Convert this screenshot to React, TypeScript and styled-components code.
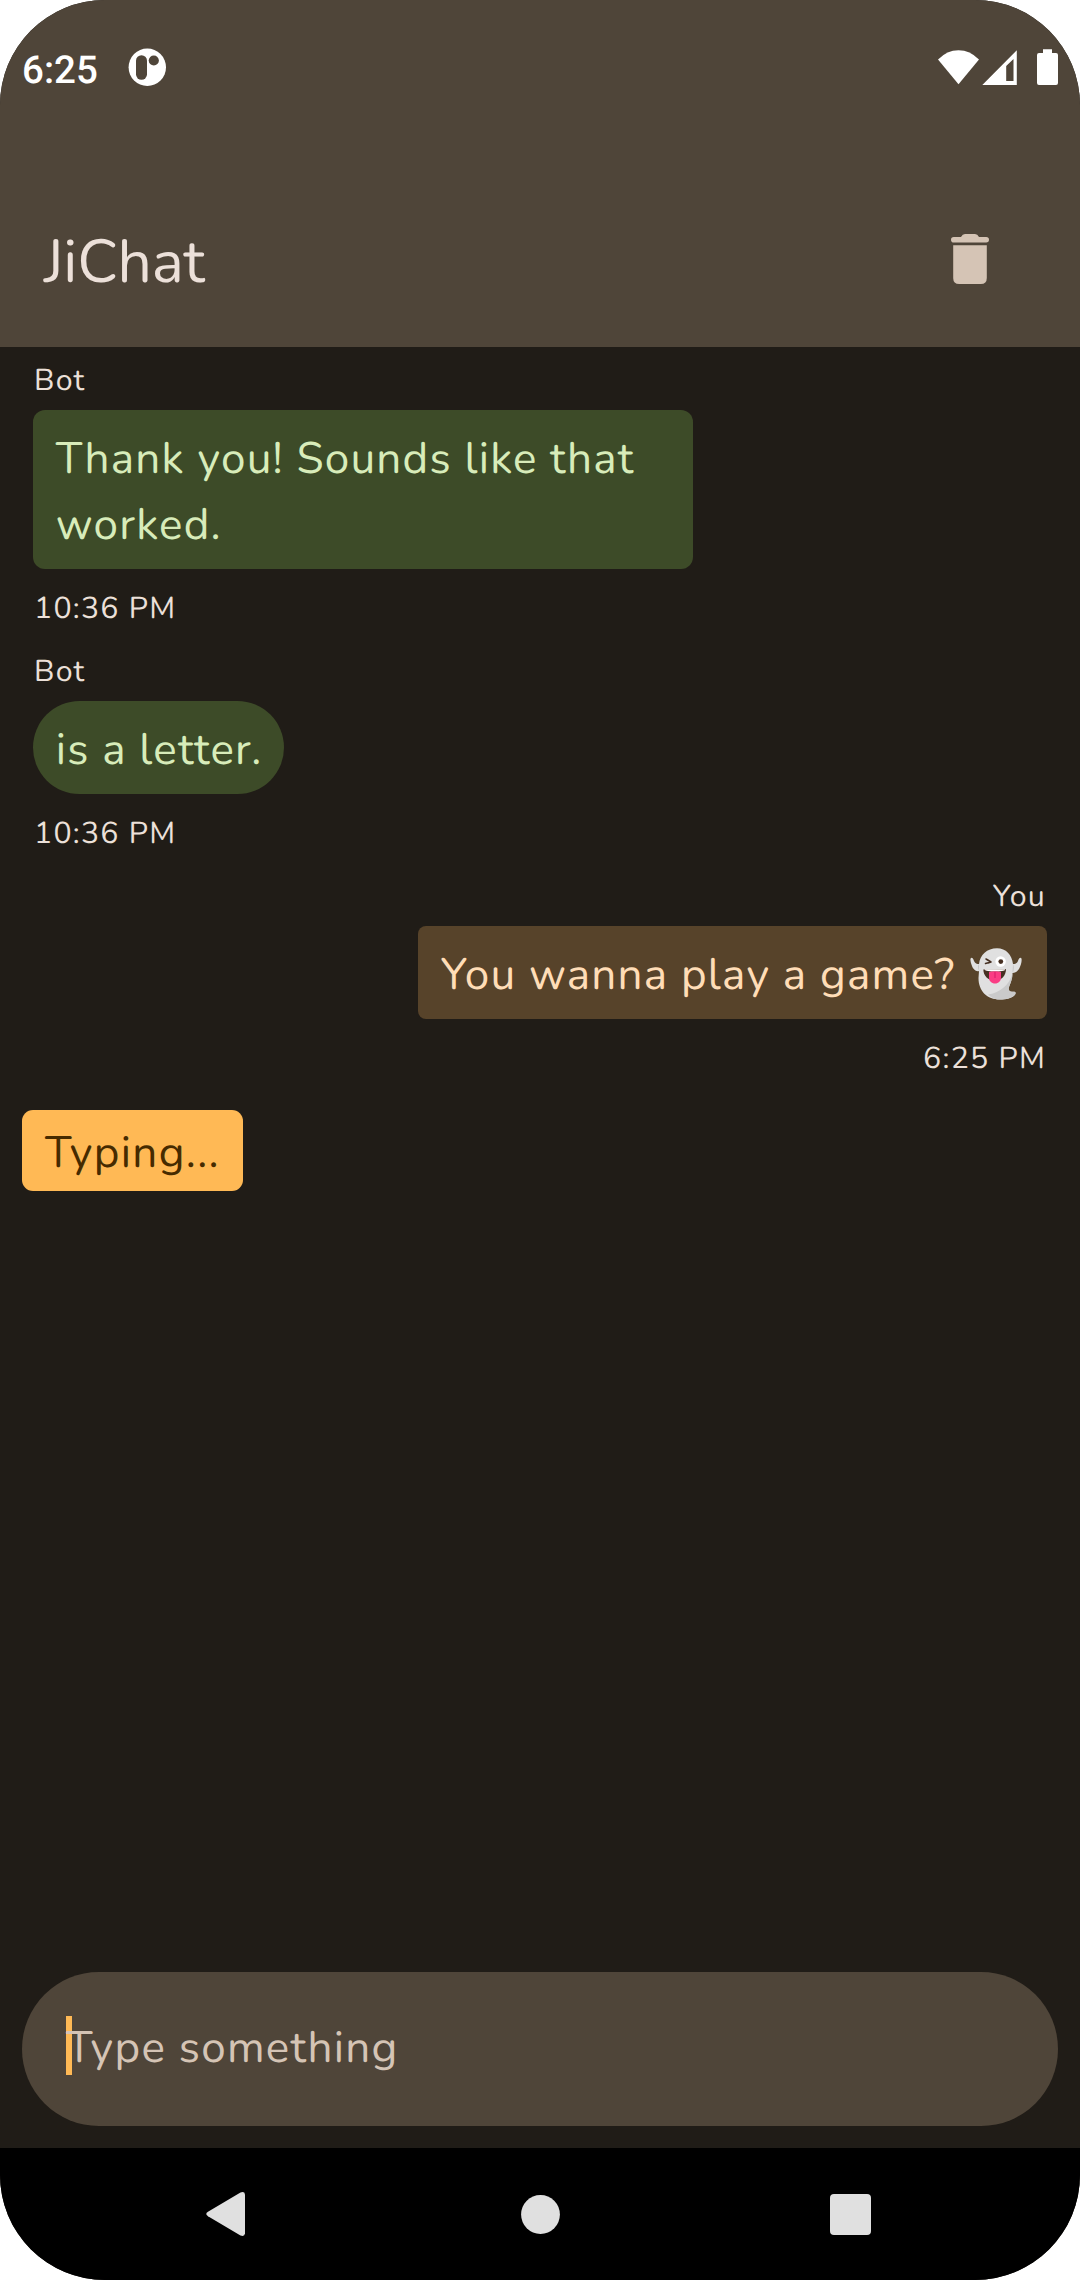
import React from "react";
import styled, { createGlobalStyle } from "styled-components";

const color = {
  bar: "#4f4539",
  surface: "#201c17",
  onSurface: "#ece0d9",
  muted: "#d5c4b5",
  bot: "#3d4b28",
  onBot: "#d8ecba",
  user: "#57432a",
  onUser: "#ffddb7",
  accent: "#ffb955",
  onAccent: "#462b00",
};

const GlobalStyle = createGlobalStyle`
  body { margin: 0; background: #fff; }
  * { box-sizing: border-box; }
  svg { display: block; }
`;

const Screen = styled.main`
  width: 1080px;
  height: 2280px;
  display: flex;
  flex-direction: column;
  overflow: hidden;
  border-radius: 105px;
  background: ${color.surface};
  color: ${color.onSurface};
  font-family: Nunito, Lato, sans-serif;
  text-rendering: geometricPrecision;
`;

const Header = styled.header`
  height: 347px;
  background: ${color.bar};
`;

const StatusBar = styled.div`
  height: 136px;
  padding: 45px 22px 0 22px;
  display: flex;
  align-items: flex-start;
  color: #fff;
`;

const Clock = styled.time`
  width: 106px;
  padding-top: 2px;
  font: 500 38.5px/48px Roboto, sans-serif;
`;

const Badge = styled.div`
  margin-top: 3px;
`;

const StatusIcons = styled.div`
  margin: 3px 0 0 auto;
`;

const TitleRow = styled.div`
  height: 211px;
  padding: 85px 91px 0 44px;
  display: flex;
  justify-content: space-between;
  align-items: flex-start;
`;

const Title = styled.h1`
  margin: 0;
  font-size: 60.5px;
  font-weight: 400;
  line-height: 84px;
  letter-spacing: -0.25px;
`;

const DeleteButton = styled.button`
  margin: 13px 0 0;
  padding: 0;
  border: 0;
  background: none;
  color: ${color.muted};
`;

const Chat = styled.section`
  flex: 1;
  padding: 11px 33px 0;
  display: flex;
  flex-direction: column;
`;

const Message = styled.article<{ $own?: boolean }>`
  display: flex;
  flex-direction: column;
  align-items: ${(p) => (p.$own ? "flex-end" : "flex-start")};
  margin-bottom: 19px;
`;

const Meta = styled.span`
  padding: 0 1px;
  font-size: 30.25px;
  line-height: 44px;
  letter-spacing: 1.25px;
`;

const Bubble = styled.p<{ $own?: boolean; $width: number; $radius: number }>`
  width: ${(p) => p.$width}px;
  margin: 8px 0 17px;
  padding: 16px 0 11px 22.7px;
  border-radius: ${(p) => p.$radius}px;
  background: ${(p) => (p.$own ? color.user : color.bot)};
  color: ${(p) => (p.$own ? color.onUser : color.onBot)};
  font-size: 44px;
  line-height: 66px;
  letter-spacing: 1.24px;
  white-space: pre-line;
  display: flex;
`;

const EmojiSlot = styled.span`
  margin: 6px 25px 0 auto;
`;

const Typing = styled.div`
  width: 221px;
  height: 81px;
  margin: 11px 0 0 -11px;
  padding: 10px 0 0 23px;
  border-radius: 11px;
  background: ${color.accent};
  color: ${color.onAccent};
  font-size: 44px;
  line-height: 66px;
  letter-spacing: 1.375px;
`;

const Composer = styled.div`
  height: 154px;
  margin: 0 22px 22px;
  padding: 44px;
  display: flex;
  border-radius: 77px;
  background: ${color.bar};
`;

const Caret = styled.span`
  width: 5.5px;
  height: 59px;
  margin-right: -5.5px;
  background: ${color.accent};
`;

const Placeholder = styled.span`
  z-index: 1;
  margin-top: -1px;
  color: ${color.muted};
  font-size: 44px;
  line-height: 66px;
  letter-spacing: 1.28px;
`;

const NavBar = styled.nav`
  height: 132px;
  padding-left: 206px;
  display: grid;
  grid-template-columns: 315px 309px 41px;
  align-items: center;
  background: #000;
  color: #e0e0e0;
`;

const AppBadge = () => (
  <svg width="38" height="38" viewBox="0 0 38 38">
    <circle cx="19.3" cy="19.3" r="18.7" fill="#fff" />
    <rect x="8" y="7.2" width="11" height="24.6" rx="5.5" fill={color.bar} />
    <path d="M20.500 14V10Q20.500 8 22 7.200L17 7Q19.500 9.500 19.500 14Z" fill="#fff" />
    <circle cx="25.8" cy="12.500" r="5.1" fill={color.bar} />
  </svg>
);

const SystemIcons = () => (
  <svg width="122" height="38" viewBox="936 48 122 38" fill="#fff">
    <path d="M938 59.5Q947 50.2 958.5 50.2T979 59.5L958.5 84.3Z" />
    <path fillRule="evenodd" d="M982.3 85L1016.8 50.3V85ZM1006.2 66V81H1013.5V59Z" />
    <path d="M1043 49.3H1052V53H1056Q1058 53 1058 55V83Q1058 85 1056 85H1039Q1037 85 1037 83V55Q1037 53 1039 53H1043Z" />
  </svg>
);

const TrashIcon = () => (
  <svg width="38" height="50" viewBox="951 234 38 50" fill="currentColor">
    <path d="M953.8 237H961Q962.5 234 965 234H975Q977.5 234 979 237H986.2A2.8 2.8 0 0 1 986.2 242.6H953.8A2.8 2.8 0 0 1 953.8 237Z" />
    <path d="M953.2 245.2H986.8V278Q986.8 284 980.8 284H959.2Q953.2 284 953.2 278Z" />
  </svg>
);

const Ghost = () => (
  <svg width="52" height="52" viewBox="0 0 52 52" role="img" aria-label="👻">
    <path fill="#e0e0e0" d="M9 23C6 24 3 21 2 18C1 15 0 12 .6 10.5C1.6 9 3 10 4 13C5 15.5 7 16 9 16C10 7 17 .3 27 .3C36 .3 42 7 43 16C45 16 47 15.500 48 13C49 10 50.500 9 51.500 10.500C52 13 51 17 49.500 20C48 23 45.500 25 42.500 25C42.500 31 40.500 35 39 39C38 43 40 44 43 43.700C46 43.500 46 45 45 46.800C42 50.500 36 51.500 30 51.500C17 51.500 8.500 43 8.500 30Z" />
    <path fill="#cacaca" d="M42.500 25C42.500 31 40.500 35 39 39C38 43 40 44 43 43.700C46 43.500 46 45 45 46.800C42 50.500 36 51.500 30 51.500C25 51.500 21 49.500 18 46.500C29 45 40 37 42.500 25Z" />
    <path fill="#c6c6c6" d="M9 16Q7 18 9 23ZM43 16Q45 20 42.500 25Z" />
    <path fill="none" stroke="#463022" strokeWidth="1.5" strokeLinecap="round" strokeLinejoin="round" d="M16 11L21 14L15.500 15.500M17 11.500L21 14L18 15" />
    <circle cx="30.600" cy="13.500" r="5.200" fill="#fff" />
    <circle cx="30.800" cy="13.600" r="2.400" fill="#463022" />
    <path fill="#463022" d="M13.300 21.500Q25 21 36 21C36 28 31 32.500 25 32.500C18 32.500 13.500 28 13.300 21.500Z" />
    <path fill="#fff" d="M14.500 21.300H35.500Q35 23 32 23Q25 24 18 23Q15 23 14.500 21.300Z" />
    <path fill="#fa3d84" d="M19 24Q25 22.500 31 24V29.500C31 33 28.500 35.500 25 35.500C21.500 35.500 19 33 19 29.500Z" />
    <path stroke="#d81b68" d="M25 24V30" />
  </svg>
);

const messages = [
  { from: "Bot", text: "Thank you! Sounds like that\nworked.", time: "10:36 PM", width: 660, radius: 12 },
  { from: "Bot", text: "is a letter.", time: "10:36 PM", width: 251, radius: 46.5 },
  { from: "You", text: "You wanna play a game?", time: "6:25 PM", width: 629, radius: 8, own: true },
];

export default function App() {
  return (
    <>
      <GlobalStyle />
      <Screen>
        <Header>
          <StatusBar>
            <Clock>6:25</Clock>
            <Badge>
              <AppBadge />
            </Badge>
            <StatusIcons>
              <SystemIcons />
            </StatusIcons>
          </StatusBar>
          <TitleRow>
            <Title>JiChat</Title>
            <DeleteButton aria-label="Delete">
              <TrashIcon />
            </DeleteButton>
          </TitleRow>
        </Header>
        <Chat>
          {messages.map((m, i) => (
            <Message key={i} $own={m.own}>
              <Meta>{m.from}</Meta>
              <Bubble $own={m.own} $width={m.width} $radius={m.radius}>
                {m.text}
                {m.own && (
                  <EmojiSlot>
                    <Ghost />
                  </EmojiSlot>
                )}
              </Bubble>
              <Meta>{m.time}</Meta>
            </Message>
          ))}
          <Typing>Typing...</Typing>
        </Chat>
        <Composer>
          <Caret />
          <Placeholder>Type something</Placeholder>
        </Composer>
        <NavBar>
          <svg width="39" height="46" viewBox="0 0 39 46" fill="currentColor">
            <path d="M2 20.800L34.500 1.500Q38.500 0 39 3.500V42.500Q38.500 46 34.500 44.500L2 25.200Q-1.500 23 2 20.800Z" />
          </svg>
          <svg width="39" height="39" viewBox="0 0 39 39" fill="currentColor">
            <circle cx="19.500" cy="19.500" r="19.400" />
          </svg>
          <svg width="41" height="41" viewBox="0 0 41 41" fill="currentColor">
            <rect width="41" height="41" rx="4" />
          </svg>
        </NavBar>
      </Screen>
    </>
  );
}
